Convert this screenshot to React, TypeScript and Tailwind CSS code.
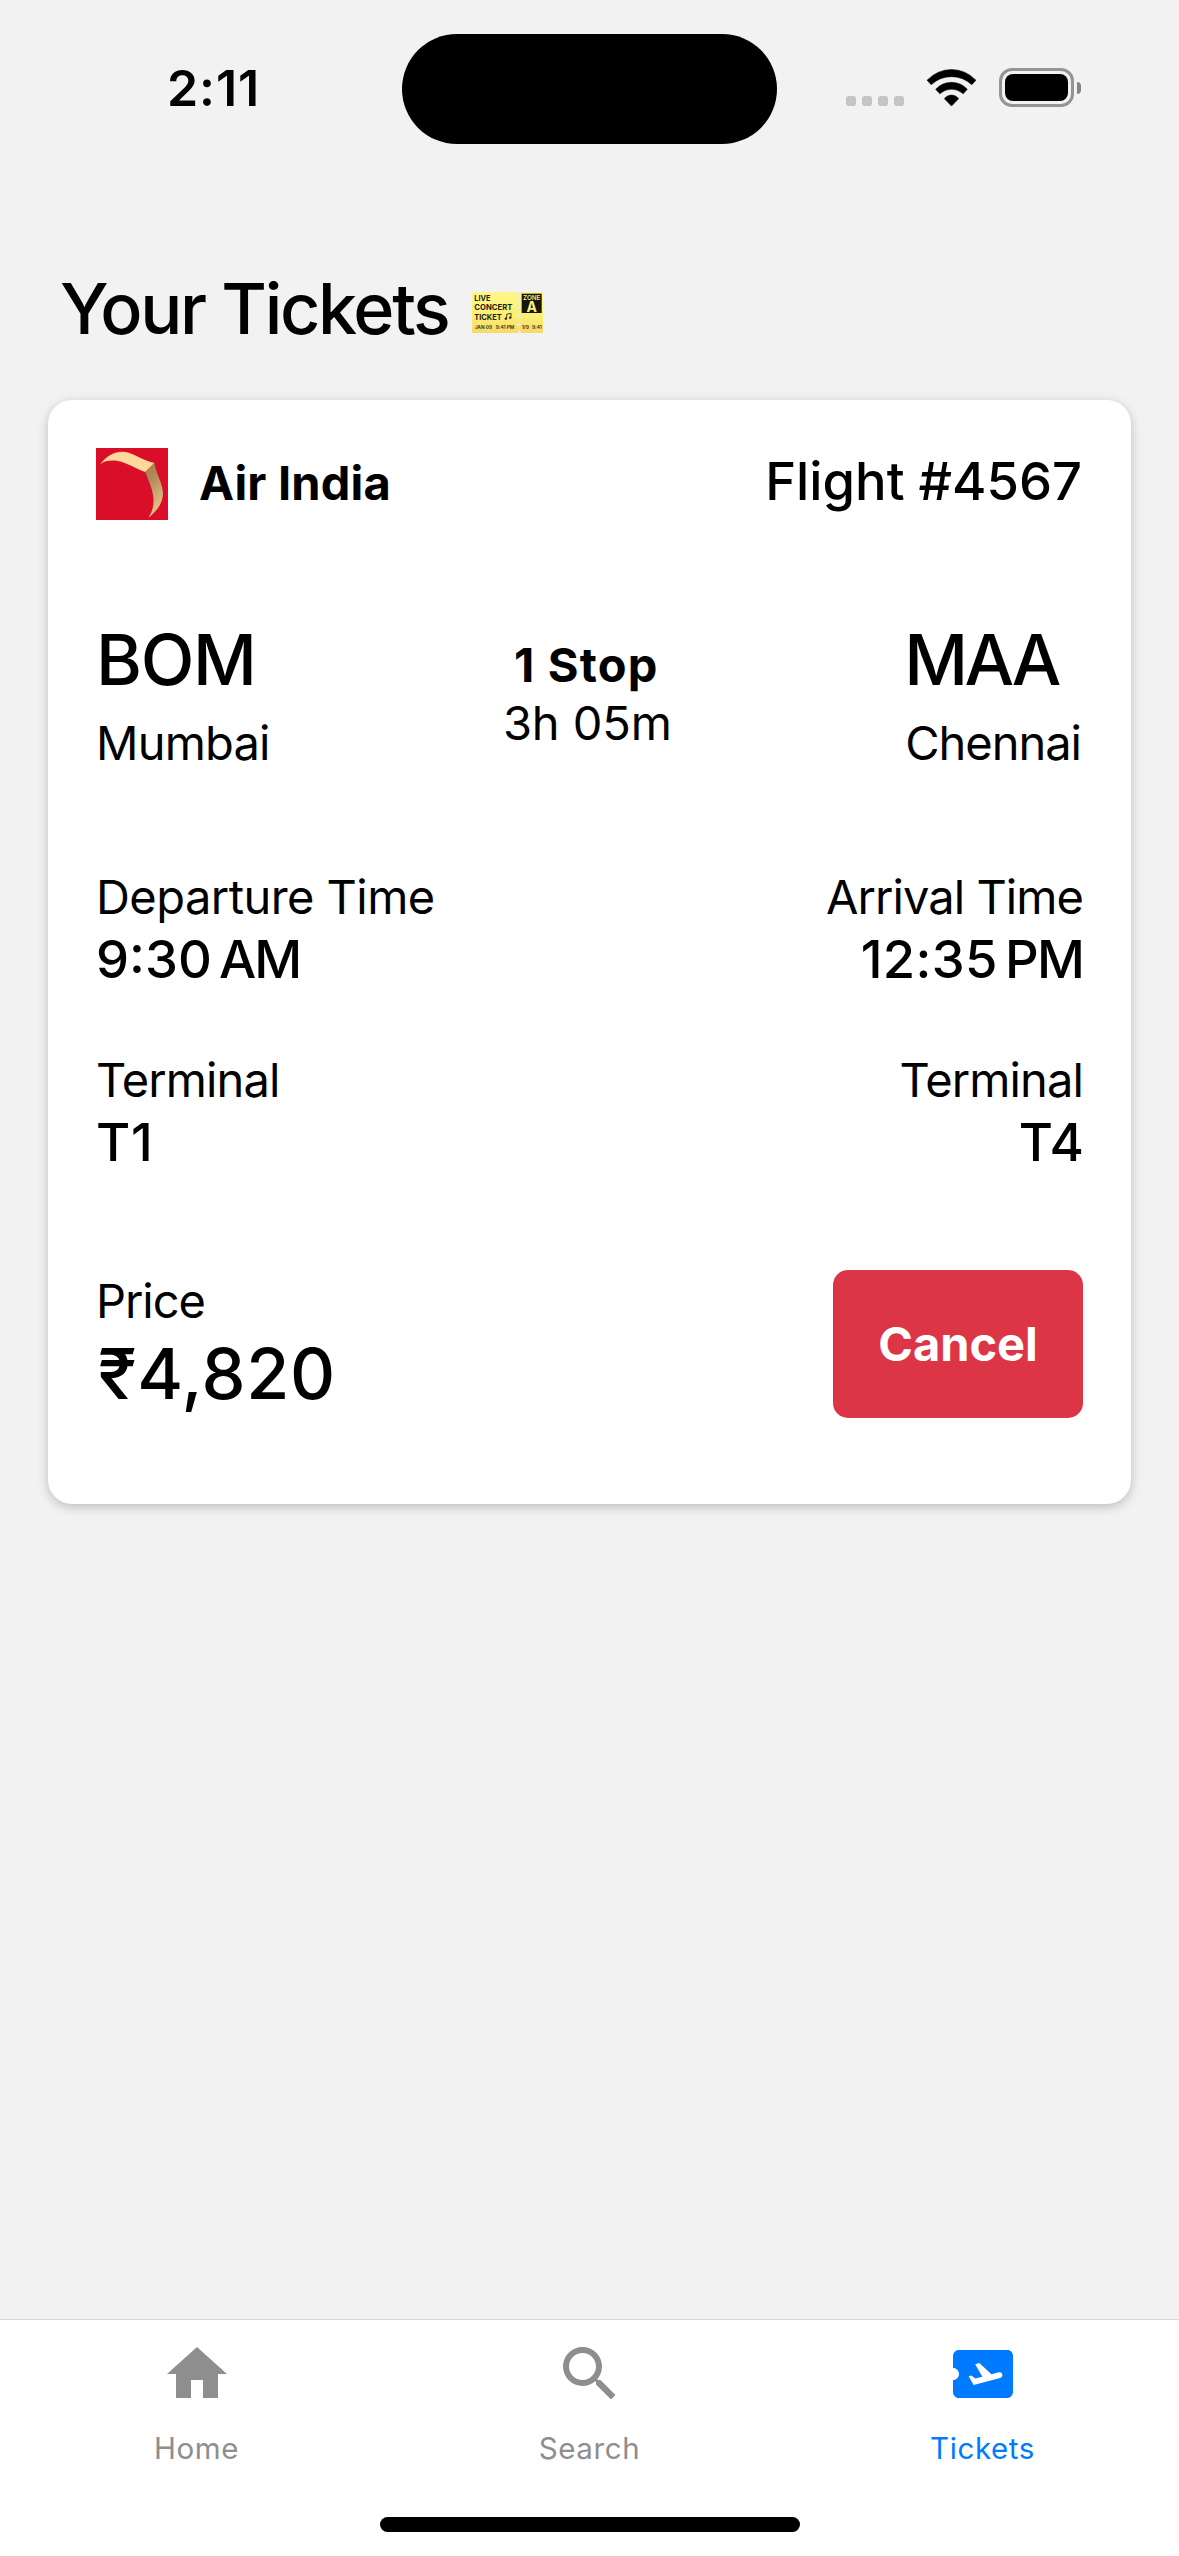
import React from 'react';
import { MdAirplaneTicket, MdHome, MdSearch } from 'react-icons/md';

function WifiIcon() {
  return (
    <svg viewBox="318 86 153 114" className="mt-[68.5px] ml-[22px] h-[38px] w-[51px] shrink-0" fill="#000" stroke="#000" strokeWidth="1.5" strokeLinejoin="round">
      <path d="M321 119.500Q353 87.500 394.500 87.500Q436 87.500 468 119.500L455.500 133Q429 109 394.500 109Q360 109 333.500 133Z" />
      <path d="M347 147Q366.500 126 394.500 126Q422.500 126 442 147L429.500 160.500Q415 146.500 394.500 146.500Q374 146.500 359.500 160.500Z" />
      <path d="M373 175Q382 164 394.500 164Q407 164 416 175L394.500 197Z" />
    </svg>
  );
}

function Battery() {
  return (
    <div className="mt-[68px] ml-[22px] flex h-[39px] items-center gap-[3px]">
      <div className="h-[39px] w-[75px] rounded-[13px] border-[3px] border-[#949494] p-[3px]">
        <div className="h-[27px] w-[63px] rounded-[8px] bg-black" />
      </div>
      <div className="h-[12px] w-[4px] rounded-r-full bg-[#858585]" />
    </div>
  );
}

function StatusBar() {
  return (
    <div className="flex h-[177px] items-start pl-[167px]">
      <div className="mt-[58px] w-[235px] text-[50px] leading-[60px] font-semibold tracking-[0.9px]">2:11</div>
      <div className="mt-[33.5px] h-[110.5px] w-[375px] rounded-full bg-black" />
      <div className="mt-[96px] ml-[69px] flex gap-[6px]">
        {[0, 1, 2, 3].map((i) => (
          <span key={i} className="h-[10px] w-[10px] rounded-[3px] bg-[#c4c4c4]" />
        ))}
      </div>
      <WifiIcon />
      <Battery />
    </div>
  );
}

function TicketEmoji() {
  return (
    <svg viewBox="0 0 213 123" className="mt-[26px] ml-[24px] h-[41px] w-[71px] font-['Inter',sans-serif]">
      <defs>
        <linearGradient id="paper" x1="0" y1="0" x2="0" y2="1">
          <stop offset="0" stopColor="#fdf78a" />
          <stop offset="0.6" stopColor="#fbee74" />
          <stop offset="1" stopColor="#f6d968" />
        </linearGradient>
      </defs>
      <rect width="213" height="123" rx="2" fill="url(#paper)" />
      {[2, 23, 48, 73, 97, 120].map((y) => (
        <circle key={y} cx="141" cy={y} r="5.500" fill="#e9e8e2" />
      ))}
      <rect x="149" y="5" width="60" height="58" fill="#16160c" />
      <g fill="#22210f" fontWeight="700" fontSize="24">
        <text x="7" y="27" textLength="48" lengthAdjust="spacingAndGlyphs">LIVE</text>
        <text x="7" y="55" textLength="114" lengthAdjust="spacingAndGlyphs">CONCERT</text>
        <text x="7" y="83" textLength="82" lengthAdjust="spacingAndGlyphs">TICKET</text>
      </g>
      <g fill="none" stroke="#22210f" strokeWidth="2.500">
        <path d="M104 80V67L117 64V77" />
      </g>
      <circle cx="101.500" cy="80" r="3.500" fill="#22210f" />
      <circle cx="114.500" cy="77" r="3.500" fill="#22210f" />
      <g fill="#4a4216" fontWeight="700" fontSize="14">
        <text x="8" y="111" textLength="52" lengthAdjust="spacingAndGlyphs">JAN 09</text>
        <text x="71" y="111" textLength="56" lengthAdjust="spacingAndGlyphs">9:41 PM</text>
        <text x="149" y="111" textLength="22" lengthAdjust="spacingAndGlyphs">1/9</text>
        <text x="180" y="111" textLength="29" lengthAdjust="spacingAndGlyphs">9:41</text>
      </g>
      <text x="153" y="23" fontSize="20" fontWeight="600" fill="#f7ec7a" textLength="52" lengthAdjust="spacingAndGlyphs">ZONE</text>
      <text x="179" y="59" fontSize="42" fontWeight="700" fill="#fbf07c" textAnchor="middle">A</text>
    </svg>
  );
}

function AirlineLogo() {
  return (
    <svg viewBox="0 0 216 216" className="h-[72px] w-[72px]">
      <defs>
        <linearGradient id="blade" x1="0" y1="0" x2="0.3" y2="1">
          <stop offset="0" stopColor="#a37c4b" />
          <stop offset="0.35" stopColor="#b08a58" />
          <stop offset="1" stopColor="#e6c48a" />
        </linearGradient>
      </defs>
      <rect width="216" height="216" fill="#da0e29" />
      <path d="M12 49C30 26 52 11 78 11C108 11 136 36 175 45L148 72C120 62 92 43 62 38C42 36 26 38 12 49Z" fill="#ffd89c" />
      <path d="M175 45C182 82 201 108 201 138C200 165 183 190 157 209C170 190 174 170 172 148C169 118 156 96 148 72Z" fill="url(#blade)" />
    </svg>
  );
}

function TicketCard() {
  return (
    <div className="mx-[48px] mt-[48px] rounded-[24px] bg-white px-[48px] pt-[48px] pb-[86px] shadow-[0_3px_11px_rgba(0,0,0,0.22)]">
      <div className="flex h-[72px] items-start justify-between">
        <div className="flex gap-[31px]">
          <AirlineLogo />
          <div className="mt-[6px] text-[47px] leading-[58px] font-bold tracking-[0.18px]">Air India</div>
        </div>
        <div className="mt-px mr-px text-[52.5px] leading-[64px] font-medium">Flight #4567</div>
      </div>

      <div className="mt-[96px] flex items-center justify-between">
        <div>
          <div className="pt-px text-[70px] leading-[86px] font-medium tracking-[-1.32px]">BOM</div>
          <div className="mt-[11px] text-[47px] leading-[58px] tracking-[-0.81px]">Mumbai</div>
        </div>
        <div className="text-center text-[47px] leading-[58px]">
          <div className="mr-[2px] font-bold tracking-[1.2px]">1 Stop</div>
          <div className="tracking-[-0.1px]">3h 05m</div>
        </div>
        <div className="mr-[2px]">
          <div className="-ml-px pt-px text-[70px] leading-[86px] font-medium tracking-[-3.5px]">MAA</div>
          <div className="mt-[11px] text-[47px] leading-[58px] tracking-[-1px]">Chennai</div>
        </div>
      </div>

      <div className="mt-[96px] flex justify-between">
        <div>
          <div className="text-[47px] leading-[58px] tracking-[-0.55px]">Departure Time</div>
          <div className="mt-px text-[52.5px] leading-[64px] font-medium">
            9:30<span className="tracking-[-2px]">{'\u202f'}AM</span>
          </div>
        </div>
        <div className="text-right">
          <div className="text-[47px] leading-[58px] tracking-[-0.93px]">Arrival Time</div>
          <div className="mt-px text-[52.5px] leading-[64px] font-medium tracking-[0.3px]">
            12:35<span className="tracking-[-1.8px]">{'\u202f'}PM</span>
          </div>
        </div>
      </div>

      <div className="mt-[60px] flex justify-between">
        <div>
          <div className="text-[47px] leading-[58px] tracking-[-0.89px]">Terminal</div>
          <div className="mt-px text-[52.5px] leading-[64px] font-medium tracking-[0.8px]">T1</div>
        </div>
        <div className="text-right">
          <div className="text-[47px] leading-[58px] tracking-[-0.89px]">Terminal</div>
          <div className="mt-px -mr-px text-[52.5px] leading-[64px] font-medium">T4</div>
        </div>
      </div>

      <div className="mt-[96px] flex items-center justify-between">
        <div>
          <div className="text-[47px] leading-[58px] tracking-[-1.05px]">Price</div>
          <div className="-mb-px ml-[2px] pt-px text-[70px] leading-[86px] font-medium tracking-[0.62px]">₹4,820</div>
        </div>
        <button className="flex h-[148px] w-[250px] items-center justify-center rounded-[15px] bg-[#dc3545] text-[47px] leading-[58px] font-bold text-white">
          Cancel
        </button>
      </div>
    </div>
  );
}

function TabBar() {
  return (
    <div className="flex h-[237px] flex-col items-center border-t border-[#d8d8d8] bg-white">
      <div className="flex w-full pt-[18px] text-[29.5px] leading-[36px] text-[#8e8e8f]">
        <div className="flex flex-1 flex-col items-center">
          <MdHome className="h-[72px] w-[72px]" />
          <div className="mt-[20px] tracking-[0.6px]">Home</div>
        </div>
        <div className="flex flex-1 flex-col items-center">
          <MdSearch className="h-[72px] w-[72px]" />
          <div className="mt-[20px] tracking-[0.6px]">Search</div>
        </div>
        <div className="flex flex-1 flex-col items-center text-[#007aff]">
          <MdAirplaneTicket className="h-[72px] w-[72px]" />
          <div className="mt-[20px] tracking-[0.6px]">Tickets</div>
        </div>
      </div>
      <div className="mt-auto mb-[24px] h-[15px] w-[420px] rounded-full bg-black" />
    </div>
  );
}

export default function App() {
  return (
    <div className="flex h-[2556px] w-[1179px] flex-col overflow-hidden bg-[#f2f2f2] font-['Inter',sans-serif] text-black">
      <StatusBar />
      <div className="flex items-start pt-[89px] pl-[60px]">
        <h1 className="text-[70px] leading-[86px] font-medium tracking-[-2.3px]">Your Tickets</h1>
        <TicketEmoji />
      </div>
      <TicketCard />
      <div className="flex-1" />
      <TabBar />
    </div>
  );
}
